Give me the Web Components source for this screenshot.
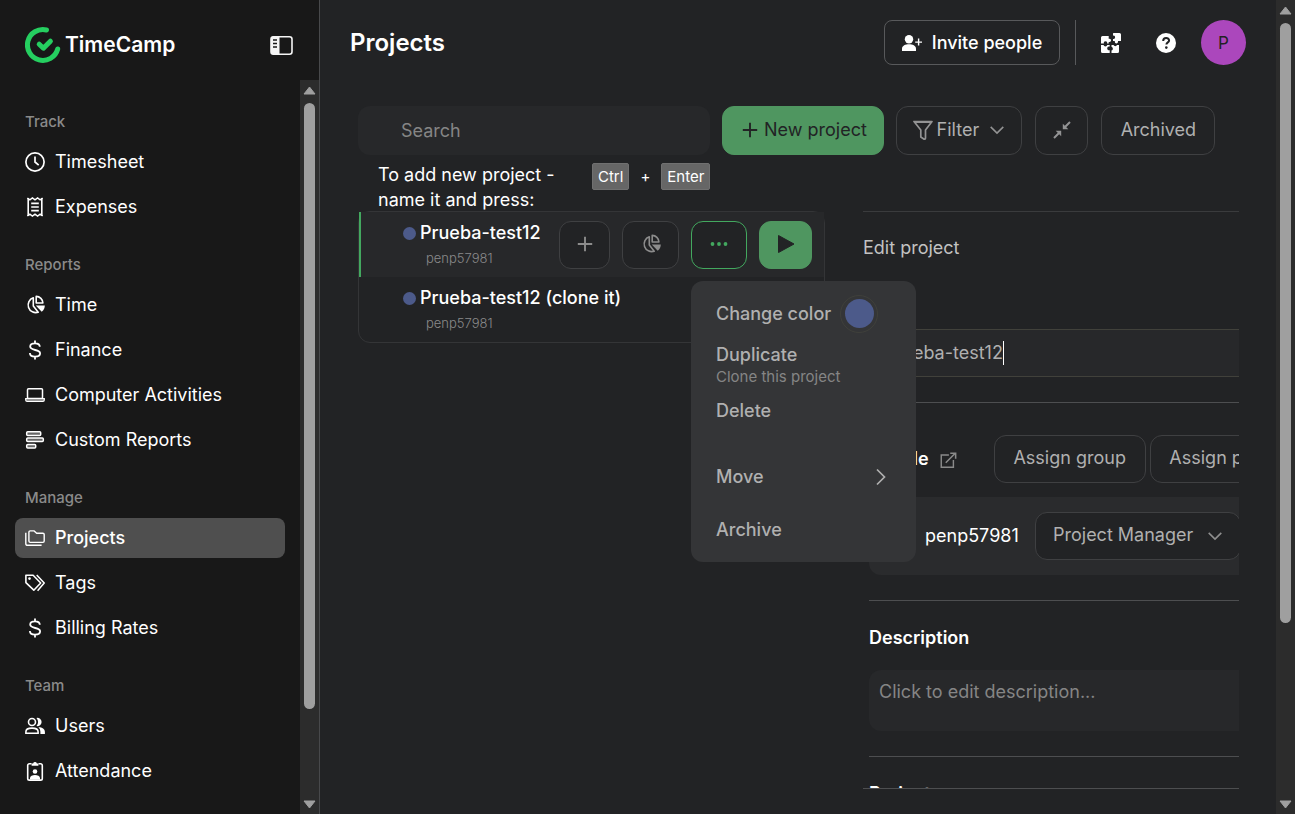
<!DOCTYPE html>
<html lang="en">
<head>
<meta charset="utf-8">
<title>Projects - TimeCamp</title>
<meta name="viewport" content="width=device-width, initial-scale=1">
<style>
  html, body { height: 100%; margin: 0; }
  body {
    --green: #4f9660;
    --line: #3f4042;
    --muted: #b0b0b0;
    background: #222325;
    color: #fff;
    font: 400 17px/24px Inter, "Liberation Sans", sans-serif;
    overflow: hidden;
  }
</style>
</head>
<body>
<tc-app>
  <tc-sidebar slot="sidebar">
    <tc-nav-group label="Track">
      <tc-nav-item icon="clock">Timesheet</tc-nav-item>
      <tc-nav-item icon="receipt">Expenses</tc-nav-item>
    </tc-nav-group>
    <tc-nav-group label="Reports">
      <tc-nav-item icon="pie">Time</tc-nav-item>
      <tc-nav-item icon="dollar">Finance</tc-nav-item>
      <tc-nav-item icon="laptop">Computer Activities</tc-nav-item>
      <tc-nav-item icon="bars">Custom Reports</tc-nav-item>
    </tc-nav-group>
    <tc-nav-group label="Manage">
      <tc-nav-item icon="folders" active>Projects</tc-nav-item>
      <tc-nav-item icon="tags">Tags</tc-nav-item>
      <tc-nav-item icon="dollar">Billing Rates</tc-nav-item>
    </tc-nav-group>
    <tc-nav-group label="Team">
      <tc-nav-item icon="users">Users</tc-nav-item>
      <tc-nav-item icon="badge">Attendance</tc-nav-item>
    </tc-nav-group>
  </tc-sidebar>
  <tc-header slot="header">Projects</tc-header>
  <tc-toolbar slot="toolbar"></tc-toolbar>
  <tc-hint slot="hint">To add new project - name it and press:</tc-hint>
  <tc-project-list slot="list">
    <tc-project-row owner="penp57981" selected>Prueba-test12
      <tc-row-actions slot="actions">
        <tc-menu slot="menu"></tc-menu>
      </tc-row-actions>
    </tc-project-row>
    <tc-project-row owner="penp57981">Prueba-test12 (clone it)</tc-project-row>
  </tc-project-list>
  <tc-edit-panel slot="panel"></tc-edit-panel>
</tc-app>

<script>
const BASE = ':host, *, *::before, *::after { box-sizing: border-box; } :host([hidden]) { display: none; }';

function define(name, css, html, setup) {
  const template = document.createElement('template');
  template.innerHTML = `<style>${BASE}${css}</style>${html}`;
  customElements.define(name, class extends HTMLElement {
    constructor() {
      super();
      this.attachShadow({ mode: 'open' }).append(template.content.cloneNode(true));
    }
    connectedCallback() {
      if (setup) setup(this, this.shadowRoot);
    }
  });
}

const ICONS = {
  clock: '<circle cx="10" cy="10" r="9.1" fill="none" stroke="currentColor" stroke-width="1.7"/><path d="M10 4.5V10l3.7 3.2" fill="none" stroke="currentColor" stroke-width="1.7"/>',
  receipt: '<path d="M3.2 1v18M16.8 1v18" stroke="currentColor" stroke-width="1.6"/><path d="M2.4 1l2.5 1.8L7.4 1 10 2.8 12.6 1l2.5 1.8L17.6 1M2.4 19l2.5-1.8L7.4 19l2.6-1.8 2.6 1.8 2.5-1.8 2.5 1.8" fill="none" stroke="currentColor" stroke-width="1.5"/><path d="M6.2 6.4h7.6M6.2 10h7.6M6.2 13.6h7.6" stroke="currentColor" stroke-width="1.6"/>',
  pie: '<path d="M8.3 2.800a7.6 7.6 0 1 0 4.9 14.400L8.3 11z" fill="none" stroke="currentColor" stroke-width="1.6" stroke-linejoin="round"/><path d="M11.2 1.4v6.6h6.700a6.7 6.7 0 0 0-6.700-6.600z" fill="none" stroke="currentColor" stroke-width="1.6" stroke-linejoin="round"/><path d="M10.800 10.400h9a8 8 0 0 1-3.100 6.300z" fill="currentColor"/>',
  dollar: '<path d="M10 0.5v3M10 16.500v3M14.800 6.800c0-2.300-2-3.500-4.800-3.500S5.200 4.600 5.200 6.600c0 4.600 9.900 2.200 9.900 6.700 0 2.200-2.200 3.400-5.100 3.400s-5.100-1.200-5.100-3.700" fill="none" stroke="currentColor" stroke-width="1.800"/>',
  laptop: '<rect x="2.500" y="3.700" width="15" height="9.800" rx="1" fill="none" stroke="currentColor" stroke-width="1.500"/><path d="M.7 13.700h18.600v1.300a1.400 1.400 0 0 1-1.400 1.400H2.100A1.400 1.400 0 0 1 .7 15z" fill="#777" stroke="currentColor" stroke-width="1.200"/>',
  bars: '<g fill="#666" stroke="currentColor" stroke-width="1.500"><rect x="1.700" y="1.800" width="14" height="3.600" rx="1"/><rect x="1.700" y="8" width="16.600" height="3.600" rx="1"/><rect x="1.700" y="14.400" width="9" height="3.600" rx="1"/></g>',
  folders: '<path d="M3.900 12.500V4.200a1.300 1.300 0 0 1 1.300-1.300h3.900l2.600 2.300h6.200a1.300 1.300 0 0 1 1.300 1.300v6.600a1.300 1.300 0 0 1-1.300 1.300H5.200a1.300 1.300 0 0 1-1.300-1.300z" fill="none" stroke="currentColor" stroke-width="1.400"/><path d="M.8 4.800v10.600a1.900 1.900 0 0 0 1.900 1.900h13.900" fill="none" stroke="currentColor" stroke-width="1.400"/>',
  tags: '<path d="M.9 2.300h7.200l7.600 7.700-6.900 7.200L.9 9.600z" fill="none" stroke="currentColor" stroke-width="1.600" stroke-linejoin="round"/><path d="M11.700 2l7.500 8-6.600 7.800" fill="none" stroke="currentColor" stroke-width="1.500"/><circle cx="4.500" cy="5.600" r="1.300" fill="currentColor"/>',
  users: '<circle cx="7" cy="6" r="3.500" fill="none" stroke="currentColor" stroke-width="1.600"/><path d="M.9 17.200v-1.500c0-2.600 3-3.600 6.100-3.600s6.100 1 6.100 3.600v1.500z" fill="none" stroke="currentColor" stroke-width="1.600"/><path d="M11.500 1.900a4.200 4.200 0 1 1 0 8.200 6.100 6.100 0 0 0 0-8.200zM15 11.300c2.600.6 4.900 1.900 4.900 4.400V18h-4.500v-2.300a5.400 5.400 0 0 0-2-4.400z" fill="currentColor"/>',
  badge: '<path d="M6.500 2.700H4.400a1.700 1.700 0 0 0-1.700 1.700v13a1.700 1.700 0 0 0 1.700 1.700h11.200a1.700 1.700 0 0 0 1.700-1.700v-13a1.700 1.700 0 0 0-1.700-1.700h-2.100" fill="none" stroke="currentColor" stroke-width="1.600"/><path d="M6.600 4.700V2.400h1.500a2 2 0 0 1 3.800 0h1.500v2.300z" fill="currentColor"/><circle cx="10" cy="10.500" r="2.300" fill="currentColor"/><path d="M5 18.500v-1.600c0-3.900 10-3.900 10 0v1.600z" fill="currentColor"/>',
  userplus: '<circle cx="7" cy="6.200" r="4.200" fill="currentColor"/><path d="M0 18v-2.300c0-3 3.500-4.400 7-4.400s7 1.400 7 4.400V18z" fill="currentColor"/><path d="M16.600 5.600v7M13.200 9.100h6.800" stroke="currentColor" stroke-width="1.400"/>',
  puzzle: '<path d="M1.500 3h6.200v2.700h.8a1.600 1.600 0 0 1 0 3.200h-.8v1.500H6.100a1.700 1.700 0 1 0-3.200 0H0V4.500A1.500 1.500 0 0 1 1.500 3zM12.500 0h6A1.500 1.500 0 0 1 20 1.500V8h-3v.8a1.600 1.600 0 0 1-3.200 0V8H12V6a1.700 1.700 0 1 0 0-3.300V.5zM0 12h2.500a2 2 0 0 0 3.800 0h2.400v1.600a1.900 1.900 0 1 0 0 3.600V20H1.500A1.500 1.500 0 0 1 0 18.500zM10.500 12h2a2 2 0 0 0 3.600 0H18v6.500a1.500 1.500 0 0 1-1.500 1.500h-6v-2.400a2 2 0 0 0 0-3.800z" fill="currentColor"/>',
  help: '<circle cx="10" cy="10" r="10" fill="currentColor"/><path d="M7.200 7.900c0-3.900 5.900-3.700 5.900-.5 0 2-2.700 2-2.700 4.200" fill="none" stroke="#222325" stroke-width="2"/><circle cx="10.300" cy="14.600" r="1.300" fill="#222325"/>',
  toggle: '<rect x="1" y="1.700" width="21" height="17.600" rx="2.500" fill="none" stroke="currentColor" stroke-width="1.600"/><path d="M2 1.500h7.500v18H3a2 2 0 0 1-2-2v-14z" fill="currentColor"/><path d="M3 5h4M3 8.500h4M3 12h4" stroke="#181818" stroke-width="1.300"/>',
  filter: '<path d="M1 1.500h18L12.500 10v8a1.300 1.300 0 0 1-1.300 1.300L7.800 17V10z" fill="none" stroke="currentColor" stroke-width="1.700" stroke-linejoin="round"/><path d="M1.500 2h17" stroke="currentColor" stroke-width="2"/>',
  down: '<path d="M3 6.500l7 7 7-7" fill="none" stroke="currentColor" stroke-width="1.700"/>',
  right: '<path d="M6 2.500l7.500 7.500L6 17.500" fill="none" stroke="currentColor" stroke-width="1.700"/>',
  collapse: '<path d="M18 2l-5.500 5.500M2 18l5.500-5.500" stroke="currentColor" stroke-width="2"/><path d="M10.800 3.700v5.500h5.500zM9.200 16.300v-5.500H3.700z" fill="currentColor"/>',
  plus: '<path d="M10 2.800v14.400M2.800 10h14.400" stroke="currentColor" stroke-width="1.900"/>',
  more: '<circle cx="3.500" cy="10" r="1.900" fill="currentColor"/><circle cx="10" cy="10" r="1.900" fill="currentColor"/><circle cx="16.500" cy="10" r="1.900" fill="currentColor"/>',
  play: '<path d="M2.500 1.500v17L18 10z" fill="#222325" stroke="#222325" stroke-linejoin="round"/>',
  external: '<path d="M11 4.500H2.500V18H16V10" fill="none" stroke="currentColor" stroke-width="1.600"/><path d="M7.500 13L17.500 3M12.500 2.500h6v6" fill="none" stroke="currentColor" stroke-width="1.700"/>'
};

define('tc-icon', `
  :host { display: inline-flex; flex: none; width: 20px; height: 20px; }
  svg { width: 100%; height: 100%; display: block; }
`, '<svg viewBox="0 0 20 20" aria-hidden="true"></svg>', (el, root) => {
  const svg = root.querySelector('svg');
  const name = el.getAttribute('name');
  if (name === 'toggle') svg.setAttribute('viewBox', '0 0 23 21');
  svg.innerHTML = ICONS[name] || '';
});

define('tc-scrollbar', `
  :host { display: flex; flex-direction: column; align-items: center; justify-content: space-between;
          flex: none; width: 19px; padding: 6px 0 5px; background: #2c2c2c; }
  svg { flex: none; width: 13px; height: 9px; }
  .track { flex: 1; width: 11px; display: flex; flex-direction: column; margin: 8px 0; }
  .thumb { height: var(--thumb, 80%); border-radius: 6px; background: #9f9f9f; }
`, `
  <svg viewBox="0 0 13 9"><path d="M6.500 1L12 8H1z" fill="#9f9f9f" stroke="#9f9f9f" stroke-linejoin="round"/></svg>
  <div class="track"><div class="thumb"></div></div>
  <svg viewBox="0 0 13 9"><path d="M6.500 8L12 1H1z" fill="#9f9f9f" stroke="#9f9f9f" stroke-linejoin="round"/></svg>
`);

define('tc-app', `
  :host { display: flex; height: 100vh; min-height: 600px; }
  main { flex: 1; min-width: 0; display: flex; flex-direction: column; padding-bottom: 25px; }
  .work { flex: 1; min-height: 0; padding: 21px 37px 0 38px; display: flex; flex-direction: column; }
  .columns { flex: 1; min-height: 0; display: grid; column-gap: 38px;
             grid-template-columns: minmax(0, 467fr) minmax(0, 376fr); grid-template-rows: auto minmax(0, 1fr); }
  ::slotted([slot=hint]) { grid-column: 1; }
  ::slotted([slot=list]) { grid-column: 1; grid-row: 2; }
  ::slotted([slot=panel]) { grid-column: 2; grid-row: 2; }
  tc-scrollbar { --thumb: 78%; }
`, `
  <slot name="sidebar"></slot>
  <main>
    <slot name="header"></slot>
    <div class="work">
      <slot name="toolbar"></slot>
      <div class="columns"><slot name="hint"></slot><slot name="list"></slot><slot name="panel"></slot></div>
    </div>
  </main>
  <tc-scrollbar></tc-scrollbar>
`);

define('tc-sidebar', `
  :host { display: flex; flex-direction: column; flex: none; width: 320px; background: #181818; border-right: 1px solid #48494b; }
  header { display: flex; align-items: center; height: 80px; padding: 10px 26px 0 25px; }
  .logo { display: flex; align-items: center; gap: 4px; color: inherit; text-decoration: none; font-size: 21px; font-weight: 600; }
  .logo svg { width: 36px; height: 36px; }
  button { margin-left: auto; padding: 0; border: 0; background: none; color: #f5f5f5; display: flex; }
  button tc-icon { width: 23px; height: 21px; }
  .body { flex: 1; min-height: 0; display: flex; }
  nav { flex: 1; padding: 30px 15px 0; display: flex; flex-direction: column; gap: 26px; overflow: hidden; }
  tc-scrollbar { --thumb: 88%; }
`, `
  <header>
    <a class="logo" href="#">
      <svg viewBox="0 0 36 36" aria-hidden="true" fill="none" stroke="#25cf60" stroke-linecap="round" stroke-linejoin="round" stroke-width="5">
        <path d="M21.500 3A15.400 15.400 0 1 0 32.700 22"/><path d="M14.200 17.200l4.200 4 7-7"/>
      </svg>
      <span>TimeCamp</span>
    </a>
    <button type="button" aria-label="Toggle sidebar"><tc-icon name="toggle"></tc-icon></button>
  </header>
  <div class="body"><nav><slot></slot></nav><tc-scrollbar></tc-scrollbar></div>
`);

define('tc-nav-group', `
  :host { display: block; }
  h2 { margin: 0 0 8px; padding: 0 10px; font-size: 15px; line-height: 24px; font-weight: 500; color: #8a8a8a; }
  .items { display: flex; flex-direction: column; gap: 5px; }
`, '<h2></h2><div class="items"><slot></slot></div>', (el, root) => {
  root.querySelector('h2').textContent = el.getAttribute('label');
});

define('tc-nav-item', `
  :host { display: block; }
  a { display: flex; align-items: center; gap: 10px; height: 40px; padding: 0 10px 1px; border-radius: 8px; color: #fff; text-decoration: none; font-size: 18px; }
  tc-icon { margin-top: 1px; }
  :host([active]) a { background: #4f4f4f; font-weight: 500; }
`, '<a href="#"><tc-icon></tc-icon><span><slot></slot></span></a>', (el, root) => {
  const icon = root.querySelector('tc-icon');
  icon.setAttribute('name', el.getAttribute('icon'));
  icon.replaceWith(icon.cloneNode());
});

define('tc-header', `
  :host { display: flex; align-items: center; padding: 20px 30px; height: 85px; }
  h1 { margin: 0; flex: 1; font-size: 24px; line-height: 36px; font-weight: 600; }
  .invite { display: flex; align-items: center; justify-content: center; gap: 10px; width: 176px; height: 45px; padding: 0; border: 1px solid #58595b; border-radius: 8px;
            background: none; color: #fff; font: inherit; font-weight: 500; font-size: 18px; }
  .rule { width: 1px; height: 45px; margin: 0 25px 0 15px; background: #58595b; }
  .icon { display: flex; padding: 0; border: 0; background: none; color: #fff; margin-right: 35px; }
  .icon:last-of-type { margin-right: 25px; }
  .avatar { display: grid; place-items: center; width: 45px; height: 45px; border-radius: 50%; background: #ab47bc; color: #222; text-decoration: none; }
`, `
  <h1><slot></slot></h1>
  <button class="invite" type="button"><tc-icon name="userplus"></tc-icon>Invite people</button>
  <div class="rule"></div>
  <button class="icon" type="button" aria-label="Integrations"><tc-icon name="puzzle"></tc-icon></button>
  <button class="icon" type="button" aria-label="Help"><tc-icon name="help"></tc-icon></button>
  <a class="avatar" href="#">P</a>
`);

define('tc-button', `
  :host { display: block; flex: none; }
  button { display: flex; align-items: center; justify-content: center; gap: 4px; width: 100%; height: var(--height, 48px); padding: 0 0 2px;
           border: 1px solid var(--line); border-radius: 12px; background: #222325; color: var(--muted); font: inherit; font-size: 18px; white-space: nowrap; }
  :host([variant=primary]) button { background: var(--green); border-color: var(--green); color: #222325; }
  :host([variant=outline]) button { border-color: #43a85f; color: #43a85f; }
`, '<button type="button"><slot></slot></button>', (el, root) => {
  if (el.hasAttribute('label')) root.querySelector('button').setAttribute('aria-label', el.getAttribute('label'));
});

define('tc-toolbar', `
  :host { display: flex; gap: 12px; --height: 49px; }
  input { width: 40%; min-width: 0; height: 49px; padding: 0 43px; border: 0; border-radius: 12px; background: #27282a; color: #fff; font: inherit; font-size: 18px; outline: 0; }
  input::placeholder { color: #858585; opacity: 1; }
  .new { width: 162px; }
  .filter { width: 126px; }
  .fold { width: 53px; }
  .archived { width: 114px; }
  .end { display: flex; gap: 13px; }
  .chevron { width: 18px; height: 18px; margin-left: 5px; }
  tc-icon { opacity: .8; }
  .new tc-icon { opacity: 1; }
`, `
  <input type="search" placeholder="Search" aria-label="Search">
  <tc-button class="new" variant="primary"><tc-icon name="plus"></tc-icon>New project</tc-button>
  <div class="end">
    <tc-button class="filter"><tc-icon name="filter"></tc-icon>Filter<tc-icon class="chevron" name="down"></tc-icon></tc-button>
    <tc-button class="fold" label="Collapse all"><tc-icon name="collapse"></tc-icon></tc-button>
    <tc-button class="archived">Archived</tc-button>
  </div>
`);

define('tc-hint', `
  :host { display: flex; align-items: flex-start; height: 56px; padding: 7px 0 0 20px; font-size: 18px; line-height: 25px; }
  p { margin: 0; width: 200px; }
  .keys { display: flex; align-items: center; gap: 11px; margin: 1px 0 0 14px; font-size: 15px; }
  kbd { height: 27px; padding: 0 5px; border: 1px solid #707070; border-radius: 2px; background: #666; font: inherit; }
`, '<p><slot></slot></p><div class="keys"><kbd>Ctrl</kbd><span>+</span><kbd>Enter</kbd></div>');

define('tc-project-list', `
  :host { display: block; align-self: start; border: 1px solid #343537; border-radius: 12px; }
`, '<slot></slot>');

define('tc-project-row', `
  :host { display: flex; align-items: flex-start; height: 65px; padding: 9px 12px 0 42px; border-left: 2px solid transparent; }
  :host([selected]) { border-left-color: #43a85f; background: #27282a; }
  .text { min-width: 0; }
  .name { display: flex; align-items: center; gap: 4px; font-size: 18px; font-weight: 500; white-space: nowrap; }
  .dot { width: 13px; height: 13px; margin-top: 1px; border-radius: 50%; background: #4c5a8a; }
  .owner { margin: 1px 0 0 23px; font-size: 13px; font-weight: 300; color: #8a8a8a; }
  ::slotted([slot=actions]) { margin-left: auto; }
`, `
  <div class="text">
    <div class="name"><span class="dot"></span><span><slot></slot></span></div>
    <div class="owner"></div>
  </div>
  <slot name="actions"></slot>
`, (el, root) => {
  root.querySelector('.owner').textContent = el.getAttribute('owner');
});

define('tc-row-actions', `
  :host { display: flex; gap: 12px; }
  .add { width: 51px; }
  .report { width: 57px; }
  .more { width: 56px; }
  .play { width: 53px; }
  .anchor { position: relative; }
  .add, .report { --muted: #8c8c8c; }
  ::slotted([slot=menu]) { position: absolute; z-index: 5; top: 60px; left: 0; }
`, `
  <tc-button class="add" label="Add task"><tc-icon name="plus"></tc-icon></tc-button>
  <tc-button class="report" label="Report"><tc-icon name="pie"></tc-icon></tc-button>
  <div class="anchor"><tc-button class="more" variant="outline" label="More options"><tc-icon name="more"></tc-icon></tc-button><slot name="menu"></slot></div>
  <tc-button class="play" variant="primary" label="Start timer"><tc-icon name="play"></tc-icon></tc-button>
`);

define('tc-menu', `
  :host { display: flex; flex-direction: column; width: 225px; padding: 12px 0 20px; border-radius: 12px; background: #343537; }
  button { display: flex; align-items: center; width: 100%; padding: 0 25px; border: 0; background: none; color: var(--muted); font: inherit; font-size: 18px; font-weight: 500; line-height: 25px; text-align: left; }
  .color { height: 41px; gap: 9px; white-space: nowrap; }
  .swatch { display: grid; place-items: center; flex: none; width: 38px; height: 38px; border: 1px solid #3f403b; border-radius: 50%; }
  .swatch::before { content: ""; width: 29px; height: 29px; border-radius: 50%; background: #4c5a8a; }
  .duplicate { flex-direction: column; align-items: flex-start; margin-top: 8px; }
  small { font-size: 15px; line-height: 20px; font-weight: 400; color: #858585; }
  .delete { margin-top: 11px; }
  .move { margin-top: 41px; justify-content: space-between; }
  .archive { margin-top: 28px; }
`, `
  <button class="color" type="button">Change color<span class="swatch"></span></button>
  <button class="duplicate" type="button">Duplicate<small>Clone this project</small></button>
  <button class="delete" type="button">Delete</button>
  <button class="move" type="button">Move<tc-icon name="right"></tc-icon></button>
  <button class="archive" type="button">Archive</button>
`);

define('tc-edit-panel', `
  :host { display: block; overflow: hidden; border-top: 1px solid #3a3b3d; border-bottom: 1px solid #4d4e50; font-size: 18px; }
  h2 { margin: 0; padding: 24px 0; font-size: 18px; line-height: 24px; font-weight: 400; color: #c2c2c2; }
  h3 { margin: 0; font-size: 18px; line-height: 24px; font-weight: 600; }
  form { margin-left: 6px; width: calc(100% + 50px); padding-top: 45px; }
  .field { display: flex; align-items: center; height: 48px; padding: 0 14px; border: 1px solid #41413b; border-radius: 12px; background: #27282a; }
  .field input { field-sizing: content; padding: 0; border: 0; background: none; color: var(--muted); font: inherit; outline: 0; }
  .caret { width: 1px; height: 24px; background: #fff; }
  section { margin-top: 25px; padding-top: 25px; border-top: 1px solid #4d4e50; }
  .people { padding-top: 32px; }
  .head { display: flex; align-items: center; }
  .head a { display: flex; width: 18px; margin: 2px 37px 0 10px; color: #8a8a8a; }
  .head a tc-icon { width: 18px; height: 18px; }
  .group { width: 152px; margin-right: 4px; }
  .permission { width: 160px; }
  .person { display: flex; align-items: center; height: 78px; margin-top: 14px; padding-left: 15px; border-radius: 12px; background: #2a2b2d; }
  .face { width: 28px; height: 28px; border-radius: 50%; background: #4c5a8a; }
  .person .who { width: 94px; margin: 0 16px 0 13px; }
  .role { position: relative; display: flex; align-items: center; flex: none; }
  select { appearance: none; width: 206px; height: 48px; padding: 0 17px 2px; border: 1px solid var(--line); border-radius: 12px; background: #222325; color: var(--muted); font: inherit; }
  .role tc-icon { position: absolute; right: 17px; width: 18px; height: 18px; color: #8f8f8f; pointer-events: none; }
  textarea { display: block; width: 100%; height: 61px; margin-top: 20px; padding: 9px 10px; border: 0; border-radius: 12px; background: #27282a; color: #fff; font: inherit; line-height: 25px; resize: none; outline: 0; }
  textarea::placeholder { color: #858585; opacity: 1; }
`, `
  <h2>Edit project</h2>
  <form>
    <div class="field"><input type="text" value="Prueba-test12" aria-label="Project name"><span class="caret"></span></div>
    <section class="people">
      <div class="head">
        <h3>People</h3>
        <a href="#" aria-label="Open people"><tc-icon name="external"></tc-icon></a>
        <tc-button class="group">Assign group</tc-button>
        <tc-button class="permission">Assign people</tc-button>
      </div>
      <div class="person">
        <span class="face"></span><span class="who">penp57981</span>
        <div class="role"><select aria-label="Role"><option>Project Manager</option></select><tc-icon name="down"></tc-icon></div>
      </div>
    </section>
    <section>
      <h3 id="desc">Description</h3>
      <textarea aria-labelledby="desc" placeholder="Click to edit description..."></textarea>
    </section>
    <section><h3>Project</h3></section>
  </form>
`);
</script>
</body>
</html>
